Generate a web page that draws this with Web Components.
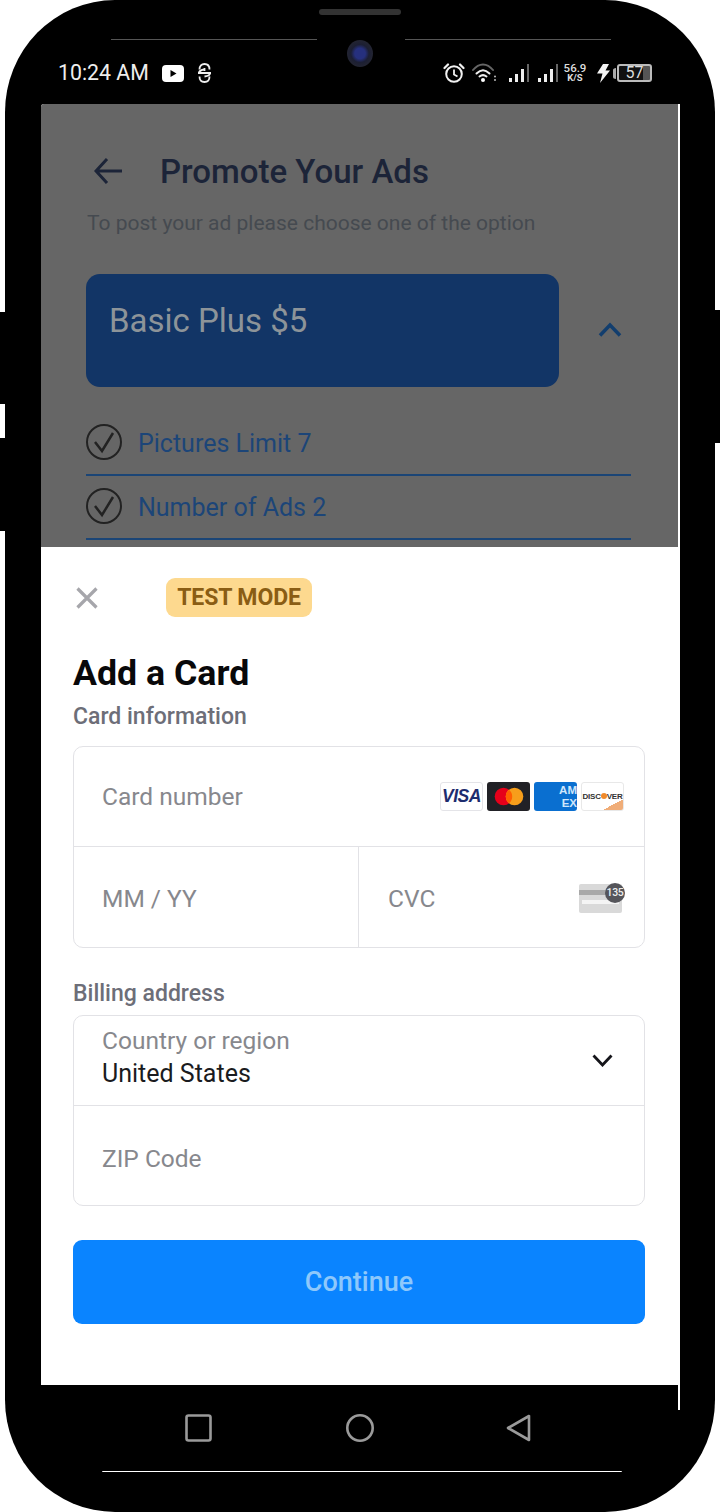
<!DOCTYPE html>
<html lang="en"><head><meta charset="utf-8"><title>Add a Card</title>
<style>html,body{margin:0;padding:0;background:#fff;font-family:Roboto,"Liberation Sans",sans-serif}</style></head>
<body>
<phone-frame>
  <status-bezel slot="top"></status-bezel>
  <promote-view></promote-view>
  <card-sheet></card-sheet>
  <nav-keys slot="bottom"></nav-keys>
</phone-frame>
<script>
function def(name, css, html){
  customElements.define(name, class extends HTMLElement{
    constructor(){super();const r=this.attachShadow({mode:'open'});r.innerHTML='<style>'+css+'</style>'+html;}
  });
}
def('phone-frame',`
:host{display:block;position:relative;width:720px;height:1512px;box-sizing:border-box;padding:0 5px;overflow:hidden}
.body{height:1512px;background:#000;border-radius:110px/112px;box-sizing:border-box;padding:0 37px 0 36px;display:flex;flex-direction:column;position:relative}
.screen{height:1281px;display:flex;flex-direction:column;overflow:hidden;background:#fff;border-radius:3px 0 0 0}
.sliver{position:absolute;left:673px;top:104px;width:2px;height:1306px;background:#fff}
.base{position:absolute;left:97px;top:1471px;width:520px;height:1px;background:#fff;border-radius:0 0 8px 8px}
.btn{position:absolute;background:#000;width:5px}
`,`<div class="body"><slot name="top"></slot><div class="screen"><slot></slot></div><slot name="bottom"></slot><div class="sliver"></div><div class="base"></div></div>
<div class="btn" style="left:0;top:312px;height:92px"></div>
<div class="btn" style="left:0;top:438px;height:93px"></div>
<div class="btn" style="right:0;top:310px;height:133px"></div>`);

def('status-bezel',`
:host{display:block;height:104px;position:relative;color:#eee;font-family:Roboto,sans-serif}
.speaker{width:82px;height:6px;border-radius:3px;background:#333;margin:0 auto;position:relative;top:9px}
.lines{display:flex;justify-content:center;gap:88px;margin-top:24px;height:1px;position:relative;top:9px;width:500px;margin-left:70px}
.lines i{display:block;width:206px;height:1px;background:#555}
.cam{position:absolute;left:306px;top:40px;width:26px;height:27px;border-radius:50%;background:radial-gradient(circle,#26307e 0 28%,#1c1f33 48%,#2b2b30 100%)}
.row{display:flex;align-items:center;height:26px;position:absolute;left:17px;right:26px;top:60px}
.time{font-size:21.300px;line-height:26px;width:104px;white-space:nowrap}
.yt{margin-right:13px}
.right{margin-left:auto;display:flex;align-items:center}
svg{display:block}
.sp{display:flex;flex-direction:column;align-items:center;width:24px;margin:0 9px 0 5px;font-weight:700;line-height:9px;color:#ddd}
.sp b{font-size:11.500px;font-weight:500}
.sp span{font-size:9.500px;font-weight:700}
.bat{width:35px;height:18px;box-sizing:border-box;border:2px solid #bbb;border-radius:3px;background:linear-gradient(90deg,#111 0 76%,#555 76%);font-size:16px;line-height:14px;text-align:center;color:#ddd;margin-left:1px}
`,`<div class="speaker"></div><div class="lines"><i></i><i></i></div><div class="cam"></div>
<div class="row"><span class="time">10:24 AM</span>
<svg class="yt" width="22" height="17" viewBox="0 0 22 17"><rect width="22" height="17" rx="4" fill="#fff"/><path d="M8.500 5l6 3.500-6 3.500z" fill="#000"/></svg>
<svg width="15" height="20" viewBox="0 0 15 20" fill="none" stroke="#eee" stroke-width="1.800"><path d="M2.500 6.500C2.500 3 4.500 1 7.500 1s5 2 5 5.500M2.500 13.500c0 3.500 2 5.500 5 5.500s5-2 5-5.500"/><path d="M1 10h13M2 10c0-2 1-3 5.500-3.500M13 10c0 2-1 3-5.500 3.500"/><path d="M7.500 5v3"/></svg>
<div class="right">
<svg width="22" height="20" viewBox="0 0 22 20" fill="none" stroke="#f2f2f2" stroke-width="2"><circle cx="11" cy="11" r="7.800"/><path d="M11 6.500V11.500L14.500 13.500" stroke-width="1.800"/><path d="M1.500 5L5 1.500M20.500 5L17 1.500" stroke-linecap="round" stroke-width="2.200"/></svg>
<svg style="margin-left:7px" width="25" height="20" viewBox="0 0 25 20" fill="none" stroke-linecap="round"><path d="M1 7C7-.5 15-.5 21 7" stroke="#666" stroke-width="2"/><path d="M4.500 10.500C9 6 13 6 17.500 10.500" stroke="#eee" stroke-width="2"/><path d="M7.500 13.500C10 11.500 12 11.500 14.500 13.500" stroke="#eee" stroke-width="2"/><circle cx="11" cy="17" r="2" fill="#fff"/><path d="M23 13.500v.1M23 17v.1" stroke="#bbb" stroke-width="2"/></svg>
<svg style="margin-left:12px" width="20" height="19" viewBox="0 0 20 19"><rect y="14" width="3" height="4" fill="#eee"/><rect x="6" y="10" width="3" height="8" fill="#eee"/><rect x="12" y="5" width="3" height="13" fill="#eee"/><rect x="18" y="0" width="2" height="18" fill="#666"/></svg>
<svg style="margin-left:9px" width="20" height="19" viewBox="0 0 20 19"><rect y="14" width="3" height="4" fill="#eee"/><rect x="6" y="10" width="3" height="8" fill="#eee"/><rect x="12" y="5" width="3" height="13" fill="#eee"/><rect x="18" y="0" width="2" height="18" fill="#666"/></svg>
<div class="sp"><b>56.9</b><span>K/S</span></div>
<svg width="14" height="19" viewBox="0 0 14 19"><path d="M7 0h6L9.500 6.500H14L4 19l2.500-9.500H1z" fill="#f4f4f4"/></svg>
<svg style="margin-left:3px" width="3" height="11" viewBox="0 0 3 11"><path d="M3 0C1 0 0 1 0 2v7c0 1 1 2 3 2z" fill="#aaa"/></svg>
<div class="bat">57</div>
</div></div>`);

def('promote-view',`
:host{display:block;height:443px;flex:none;background:#666;box-sizing:border-box;padding:0 47px 0 45px;overflow:hidden;font-family:Roboto,sans-serif}
.head{display:flex;align-items:center;height:40px;margin-top:47px}
.head svg{margin-left:8px;margin-right:38px;flex:none}
h1{margin:0;font-size:33px;font-weight:500;color:#1c2438;white-space:nowrap}
.sub{margin:20px 0 0 1px;font-size:21px;line-height:24px;color:#454a50;white-space:nowrap}
.plan{display:flex;align-items:center;margin-top:39px}
.card{width:473px;height:113px;flex:none;box-sizing:border-box;border-radius:14px;background:#123566;color:#8d9499;font-size:33px;line-height:36px;padding:29px 23px;white-space:nowrap}
.plan svg{margin-left:39px;margin-top:-2px}
`,`<div class="head"><svg width="28" height="26" viewBox="0 0 28 26" fill="none" stroke="#1c2438" stroke-width="3"><path d="M28 13H2M13 1L2 13l11 12"/></svg><h1>Promote Your Ads</h1></div>
<p class="sub">To post your ad please choose one of the option</p>
<div class="plan"><div class="card">Basic Plus $5</div><svg width="24" height="15" viewBox="0 0 24 15" fill="none" stroke="#123e6e" stroke-width="3.500"><path d="M2 13.500L12 3l10 10.500"/></svg></div>
<plan-row style="margin-top:25px" label="Pictures Limit 7"></plan-row>
<plan-row label="Number of Ads 2"></plan-row>`);

customElements.define('plan-row',class extends HTMLElement{
  constructor(){super();this.attachShadow({mode:'open'}).innerHTML=`<style>
  :host{display:flex;align-items:center;height:64px;box-sizing:border-box;width:545px;border-bottom:2px solid #1b4576;padding-bottom:2px;font-family:Roboto,sans-serif}
  span{margin-left:16px;font-size:25px;color:#1c4578;white-space:nowrap;position:relative;top:1px}
  svg{flex:none}
  </style><svg width="36" height="36" viewBox="0 0 36 36" fill="none" stroke="#222"><circle cx="18" cy="18" r="17" stroke-width="2"/><path d="M9 18l7 9L27 9" stroke-width="2.500"/></svg><span></span>`;}
  connectedCallback(){this.shadowRoot.querySelector('span').textContent=this.getAttribute('label');}
});

def('card-logos',`
:host{display:flex;gap:4px;font-family:"Liberation Sans",sans-serif}
.l{width:43px;height:29px;box-sizing:border-box;border-radius:3px;overflow:hidden;display:flex;align-items:center;justify-content:center;position:relative;white-space:nowrap}
.visa{background:#fff;border:1px solid #e4e4e8;color:#1d2c6e;font:italic 700 17.500px "Liberation Sans",sans-serif;letter-spacing:-.5px}
.mc{background:#212126}
.amex{background:#0a6fd0;color:#cfe6fb;font-weight:700;font-size:11.500px;line-height:13px;justify-content:flex-end;text-align:right}
.disc{background:linear-gradient(152deg,#fff 0 78%,#f0ad78 78%);border:1px solid #e8e8e8;color:#333;font-weight:700;font-size:8px;letter-spacing:-.25px}
.disc em{display:inline-block;width:6px;height:6px;border-radius:50%;background:#ef8a2b;vertical-align:0}
`,`<div class="l visa">VISA</div>
<div class="l mc"><svg width="30" height="19" viewBox="0 0 30 19"><circle cx="9.500" cy="9.500" r="8.800" fill="#e6001a"/><circle cx="20.500" cy="9.500" r="8.800" fill="#f79e1b"/><path d="M15 2.700a8.800 8.800 0 0 1 0 13.600a8.800 8.800 0 0 1 0-13.600z" fill="#ff5f00"/></svg></div>
<div class="l amex"><span>AM<br>EX</span></div>
<div class="l disc"><span>DISC<em></em>VER</span></div>`);

def('cvc-icon',`
:host{display:block;position:relative;width:43px;height:29px;background:#d9d9d9;border-radius:2px}
.a{position:absolute;left:0;right:0;top:6px;height:5px;background:#a8a8a8}
.b{position:absolute;left:3px;right:3px;top:16px;height:4px;background:#f4f4f4}
.c{position:absolute;left:26px;top:-1px;width:20px;height:20px;border-radius:50%;background:#55555a;color:#eee;font:500 10.500px/20px Roboto,sans-serif;text-align:center;letter-spacing:-.3px}
`,`<div class="a"></div><div class="b"></div><div class="c">135</div>`);

def('card-sheet',`
:host{display:block;flex:1;background:#fff;box-sizing:border-box;padding:31px 34px 0 32px;font-family:Roboto,sans-serif}
.top{display:flex;align-items:center;height:39px}
.top svg{margin-left:3px;flex:none}
.badge{margin-left:68px;height:39px;width:146px;border-radius:9px;background:#fdd98f;color:#8a5d14;font-size:23px;font-weight:700;line-height:40px;text-align:center;white-space:nowrap;letter-spacing:-.1px}
h2{margin:31px 0 0;font-size:35.700px;line-height:50px;font-weight:700;color:#08080a;white-space:nowrap}
.lab{font-size:23px;line-height:28px;font-weight:500;color:#6d6e78;white-space:nowrap}
.box{border:1.500px solid #e2e2e6;border-radius:10px;box-sizing:border-box;width:572px;color:#87888d;font-size:24.500px}
.f{display:flex;align-items:center;justify-content:space-between;box-sizing:border-box;padding:0 20px 0 28px}
.sp{display:flex;height:100px;border-top:1.500px solid #e2e2e6}
.sp .f{flex:none;width:284px;padding-top:3px}
.sp .f+.f{flex:1;width:auto;border-left:1.500px solid #e2e2e6;padding:3px 22px 0 29px}
.country{height:90px;border-bottom:1.500px solid #e2e2e6;padding:0 31px 7px 28px}
.country div div{line-height:33px;white-space:nowrap}
.country .v{color:#1a1b20;font-size:25px}
.country svg{margin-top:7px}
.btn{margin-top:34px;height:84px;width:572px;border-radius:9px;background:#0a84ff;color:#8ec8fb;font-size:27px;font-weight:500;line-height:84px;text-align:center}
`,`<div class="top"><svg width="22" height="22" viewBox="0 0 22 22" stroke="#a6a6ab" stroke-width="3.200" fill="none"><path d="M1.500 1.500l19 19M20.500 1.500l-19 19"/></svg><div class="badge">TEST MODE</div></div>
<h2>Add a Card</h2>
<div class="lab" style="margin-top:5px;margin-bottom:15px">Card information</div>
<div class="box" style="height:202px">
  <div class="f" style="height:99px"><span>Card number</span><card-logos></card-logos></div>
  <div class="sp"><div class="f"><span>MM / YY</span></div><div class="f"><span>CVC</span><cvc-icon></cvc-icon></div></div>
</div>
<div class="lab" style="margin-top:32px;margin-bottom:7px">Billing address</div>
<div class="box" style="height:191px">
  <div class="f country"><div><div>Country or region</div><div class="v">United States</div></div><svg width="21" height="13" viewBox="0 0 21 13" fill="none" stroke="#15151a" stroke-width="2.800"><path d="M1.500 1.500l9 9.500 9-9.500"/></svg></div>
  <div class="f" style="height:98px;padding-top:7px"><span>ZIP Code</span></div>
</div>
<div class="btn">Continue</div>`);

def('nav-keys',`
:host{display:flex;height:127px;box-sizing:border-box;padding:29px 0 0 144px;gap:0}
svg{display:block;flex:none}
`,`<svg width="27" height="28" viewBox="0 0 27 28" fill="none" stroke="#9a9a9a" stroke-width="2.600"><rect x="1.500" y="1.500" width="24" height="25" rx="2"/></svg>
<svg style="margin-left:134px" width="28" height="28" viewBox="0 0 28 28" fill="none" stroke="#9a9a9a" stroke-width="2.600"><circle cx="14" cy="14" r="12.700"/></svg>
<svg style="margin-left:132px" width="25" height="28" viewBox="0 0 25 28" fill="none" stroke="#9a9a9a" stroke-width="2.600" stroke-linejoin="round"><path d="M23 2v24L2 14z"/></svg>`);
</script>
</body></html>
